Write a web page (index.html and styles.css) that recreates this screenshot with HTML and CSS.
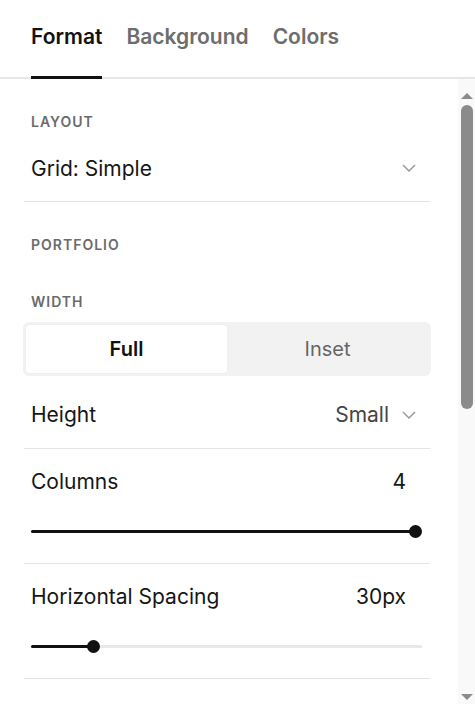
FILE: index.html
```html
<!DOCTYPE html>
<html lang="en">

<head>
  <meta charset="UTF-8" />
  <meta name="viewport" content="width=device-width, initial-scale=1" />
  <title>Section Settings</title>
  <link rel="stylesheet" href="styles.css">
</head>

<body>
  <div class="panel">
    <nav class="tabs">
      <button class="tab active">Format</button>
      <button class="tab">Background</button>
      <button class="tab">Colors</button>
    </nav>

    <div class="body">
      <div class="content">
        <div class="label">Layout</div>
        <div class="row select-row">
          <span class="row-title">Grid: Simple</span>
          <svg class="chevron" viewBox="0 0 14 8"><path d="M1 1l6 6 6-6" /></svg>
        </div>

        <div class="label label-section">Portfolio</div>
        <div class="label label-width">Width</div>
        <div class="segmented">
          <button class="segment selected">Full</button>
          <button class="segment">Inset</button>
        </div>

        <div class="row height-row">
          <span class="row-title">Height</span>
          <span class="row-value">Small
            <svg class="chevron" viewBox="0 0 14 8"><path d="M1 1l6 6 6-6" /></svg>
          </span>
        </div>

        <div class="slider-group">
          <div class="slider-head">
            <span class="row-title">Columns</span>
            <span class="slider-value">4</span>
          </div>
          <div class="track">
            <div class="fill" style="width: 385px">
              <div class="thumb"></div>
            </div>
          </div>
        </div>

        <div class="slider-group">
          <div class="slider-head">
            <span class="row-title">Horizontal Spacing</span>
            <span class="slider-value">30px</span>
          </div>
          <div class="track">
            <div class="fill" style="width: 63px">
              <div class="thumb"></div>
            </div>
          </div>
        </div>
      </div>

      <div class="scrollbar">
        <div class="arrow up"></div>
        <div class="scroll-track">
          <div class="scroll-thumb"></div>
        </div>
        <div class="arrow down"></div>
      </div>
    </div>
  </div>
</body>

</html>
```

FILE: styles.css
```css
body {
  margin: 0;
  background-color: #fff;
  font-family: "Inter", "Liberation Sans", sans-serif;
  color: #161616;
}

.panel {
  width: 475px;
  height: 704px;
  display: flex;
  flex-direction: column;
  overflow: hidden;
}

.tabs {
  display: flex;
  gap: 24px;
  padding: 0 31px;
  height: 77px;
  border-bottom: 2px solid #e6e6e6;
}

.tab {
  background: none;
  border: none;
  padding: 0 0 27px;
  margin-bottom: -2px;
  font-family: inherit;
  font-size: 21px;
  font-weight: 600;
  color: #6d6d6d;
  border-bottom: 3px solid transparent;
  display: flex;
  align-items: flex-end;
  height: 79px;
  box-sizing: border-box;
}

.tab.active {
  color: #121212;
  border-bottom-color: #121212;
}

.body {
  flex: 1;
  display: flex;
}

.content {
  flex: 1;
  padding: 33px 28px 0 24px;
}

.label {
  height: 20px;
  line-height: 20px;
  padding-left: 7px;
  font-size: 14px;
  font-weight: 600;
  letter-spacing: 1px;
  text-transform: uppercase;
  color: #6b6b6b;
}

.label-section {
  margin-top: 33px;
}

.label-width {
  margin-top: 37px;
}

.row {
  display: flex;
  align-items: center;
  justify-content: space-between;
  padding: 0 14px 0 7px;
  border-bottom: 1px solid #e4e4e4;
}

.select-row {
  margin-top: 3px;
  height: 66px;
}

.height-row {
  margin-top: 5px;
  height: 67px;
}

.row-title {
  font-size: 21px;
  color: #161616;
}

.row-value {
  display: flex;
  align-items: center;
  gap: 13px;
  font-size: 21px;
  color: #444;
}

.chevron {
  width: 14px;
  height: 8px;
  fill: none;
  stroke: #9a9a9a;
  stroke-width: 1.5;
}

.segmented {
  margin-top: 10px;
  margin-left: -1px;
  margin-right: -1px;
  height: 54px;
  padding: 3px;
  box-sizing: border-box;
  display: flex;
  background-color: #f2f2f2;
  border-radius: 6px;
}

.segment {
  flex: 1;
  border: none;
  background: none;
  font-family: inherit;
  font-size: 20px;
  color: #666;
  border-radius: 4px;
  padding: 0;
}

.segment.selected {
  background-color: #fff;
  color: #111;
  font-weight: 600;
  box-shadow: 0 0 2px rgba(0, 0, 0, 0.06);
}

.slider-group {
  padding-top: 20px;
  border-bottom: 1px solid #e4e4e4;
}

.slider-head {
  height: 25px;
  display: flex;
  align-items: center;
  justify-content: space-between;
  padding: 0 24px 0 7px;
}

.slider-value {
  font-size: 21px;
  color: #161616;
}

.track {
  margin: 36px 8px 30px 7px;
  height: 3px;
  background-color: #e8e8e8;
  border-radius: 2px;
}

.fill {
  position: relative;
  height: 3px;
  background-color: #111;
  border-radius: 2px;
}

.thumb {
  position: absolute;
  top: -5px;
  right: -6px;
  width: 13px;
  height: 13px;
  border-radius: 50%;
  background-color: #111;
}

.scrollbar {
  width: 17px;
  background-color: #f9f9f9;
  display: flex;
  flex-direction: column;
  align-items: center;
}

.arrow {
  width: 0;
  height: 0;
  border-left: 6px solid transparent;
  border-right: 6px solid transparent;
}

.arrow.up {
  border-bottom: 6px solid #8b8b8b;
  margin: 14px 0 6px;
}

.arrow.down {
  border-top: 6px solid #8b8b8b;
  margin: 6px 0 4px;
}

.scroll-track {
  flex: 1;
  width: 100%;
  display: flex;
  justify-content: center;
}

.scroll-thumb {
  width: 12px;
  height: 304px;
  border-radius: 6px;
  background-color: #8b8b8b;
}
```
